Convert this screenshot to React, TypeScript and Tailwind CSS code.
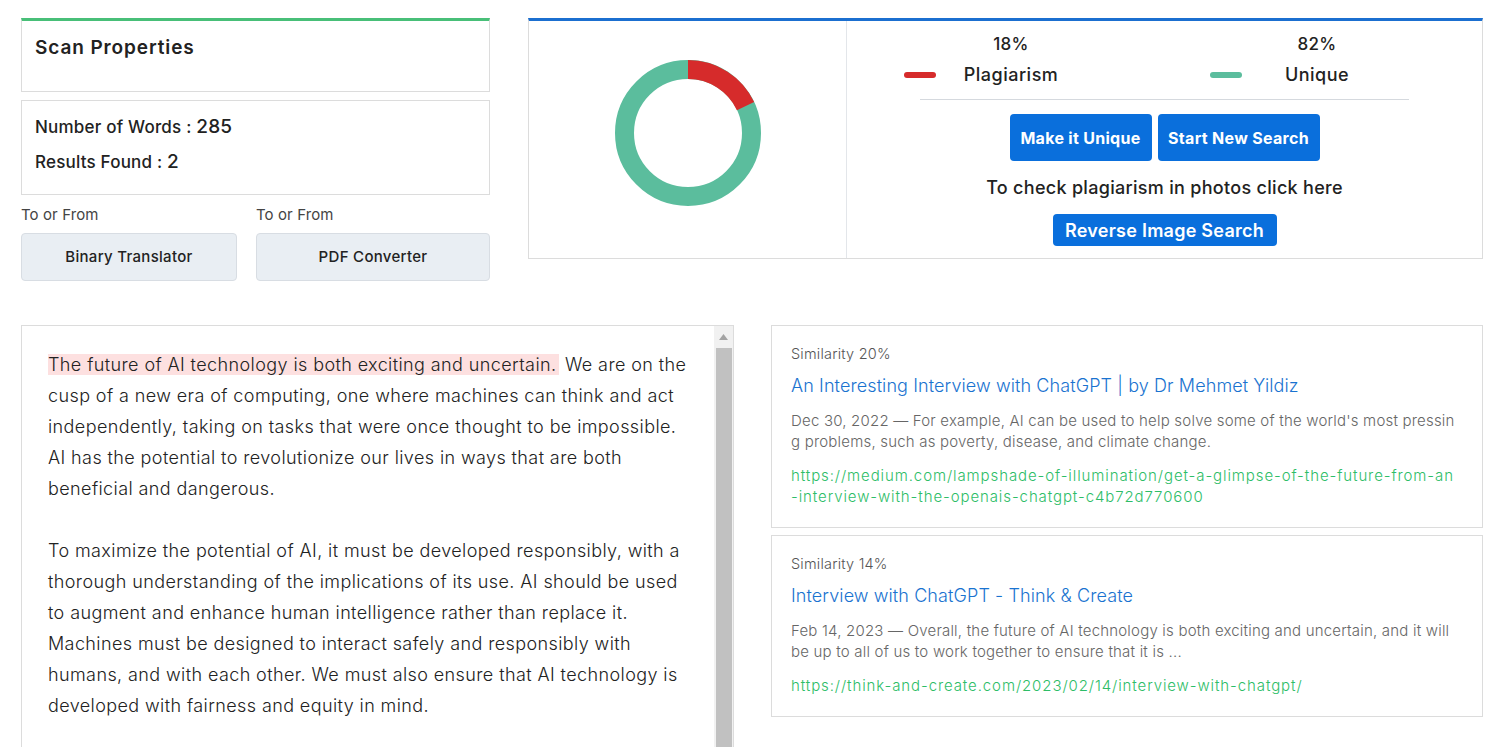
import React from 'react';

const font = { fontFamily: 'Inter, "Noto Sans", sans-serif' };

const Donut = () => {
  const r = 63.5;
  const c = 2 * Math.PI * r;
  const red = c * 0.18;
  return (
    <svg width="148" height="148" viewBox="0 0 148 148">
      <circle cx="74" cy="74" r={r} fill="none" stroke="#5bbd9d" strokeWidth="19" />
      <circle
        cx="74"
        cy="74"
        r={r}
        fill="none"
        stroke="#d62b2b"
        strokeWidth="19"
        strokeDasharray={`${red} ${c}`}
        transform="rotate(-90 74 74)"
      />
    </svg>
  );
};

const results = [
  {
    similarity: 'Similarity 20%',
    title: 'An Interesting Interview with ChatGPT | by Dr Mehmet Yildiz',
    desc: ["Dec 30, 2022 — For example, AI can be used to help solve some of the world's most pressin", 'g problems, such as poverty, disease, and climate change.'],
    url: ['https://medium.com/lampshade-of-illumination/get-a-glimpse-of-the-future-from-an', '-interview-with-the-openais-chatgpt-c4b72d770600'],
  },
  {
    similarity: 'Similarity 14%',
    title: 'Interview with ChatGPT - Think & Create',
    desc: ['Feb 14, 2023 — Overall, the future of AI technology is both exciting and uncertain, and it will', 'be up to all of us to work together to ensure that it is ...'],
    url: ['https://think-and-create.com/2023/02/14/interview-with-chatgpt/'],
  },
];

export default function App() {
  return (
    <div style={font} className="h-[747px] w-[1503px] overflow-hidden bg-white text-[#222]">
      <div className="flex items-start gap-[38px] pl-[21px] pr-[20px] pt-[18px]">
        {/* left column */}
        <div className="flex w-[469px] flex-col">
          <div className="h-[74px] border border-t-[3px] border-[#dcdcdc] border-t-[#48bf78] px-[13px] pt-[13px]">
            <h2 className="text-[19px] font-semibold tracking-[0.9px]">Scan Properties</h2>
          </div>
          <div className="mt-[8px] flex h-[95px] flex-col gap-[6px] border border-[#dcdcdc] px-[13px] pt-[12px]">
            <div className="text-[17px] font-medium tracking-[0.2px]">
              Number of Words : <span className="text-[19px]">285</span>
            </div>
            <div className="text-[17px] font-medium tracking-[0.2px]">
              Results Found : <span className="text-[19px]">2</span>
            </div>
          </div>
          <div className="mt-[9px] flex gap-[19px]">
            <div className="flex w-[216px] flex-col">
              <span className="text-[15px] leading-[22px] tracking-[0.1px] text-[#444]">To or From</span>
              <button className="mt-[7px] h-[48px] rounded-[4px] border border-[#d8dde3] bg-[#e9eef3] text-[15px] font-medium tracking-[0.3px] text-[#222]">
                Binary Translator
              </button>
            </div>
            <div className="flex flex-1 flex-col">
              <span className="text-[15px] leading-[22px] tracking-[0.1px] text-[#444]">To or From</span>
              <button className="mt-[7px] h-[48px] rounded-[4px] border border-[#d8dde3] bg-[#e9eef3] text-[15px] font-medium tracking-[0.3px] text-[#222]">
                PDF Converter
              </button>
            </div>
          </div>
        </div>

        {/* right card */}
        <div className="flex h-[241px] flex-1 border border-t-[3px] border-[#dcdcdc] border-t-[#1b6fd0]">
          <div className="flex w-[318px] items-start justify-center border-r border-[#e3e6ea] pt-[38px]">
            <Donut />
          </div>
          <div className="flex flex-1 flex-col items-center">
            <div className="flex w-full pl-[57px] pt-[12px]">
              <div className="flex items-end">
                <span className="mb-[8px] h-[6px] w-[32px] rounded-full bg-[#d62b2b]" />
                <div className="flex w-[150px] flex-col items-center">
                  <span className="text-[17px] font-medium leading-[22px] tracking-[0.3px]">18%</span>
                  <span className="mt-[9px] text-[18px] font-medium leading-[22px] tracking-[0.5px]">Plagiarism</span>
                </div>
              </div>
              <div className="ml-[124px] flex items-end">
                <span className="mb-[8px] h-[6px] w-[32px] rounded-full bg-[#5bbd9d]" />
                <div className="flex w-[150px] flex-col items-center">
                  <span className="text-[17px] font-medium leading-[22px] tracking-[0.3px]">82%</span>
                  <span className="mt-[9px] text-[18px] font-medium leading-[22px] tracking-[0.5px]">Unique</span>
                </div>
              </div>
            </div>
            <div className="mt-[13px] h-px w-[489px] bg-[#d5d9de]" />
            <div className="mt-[14px] flex gap-[6px]">
              <button className="h-[47px] w-[142px] rounded-[4px] bg-[#0a6fdc] text-[16px] font-bold tracking-[0.3px] text-white">Make it Unique</button>
              <button className="h-[47px] w-[162px] rounded-[4px] bg-[#0a6fdc] text-[16px] font-bold tracking-[0.3px] text-white">Start New Search</button>
            </div>
            <p className="mt-[16px] text-[18px] font-medium leading-[22px] tracking-[0.3px]">To check plagiarism in photos click here</p>
            <button className="mt-[15px] h-[32px] w-[224px] rounded-[4px] bg-[#0a6fdc] text-[18px] font-semibold tracking-[0.25px] text-white">
              Reverse Image Search
            </button>
          </div>
        </div>
      </div>

      {/* bottom */}
      <div className="mt-[44px] flex gap-[37px] pl-[21px] pr-[20px]">
        <div className="flex h-[440px] w-[713px] border border-[#dcdcdc]">
          <div className="flex-1 pl-[26px] pt-[23px] text-[18px] font-light leading-[31px] tracking-[0.4px] text-[#222]">
            <p>
              <span className="bg-[#fde0e0] pr-[3px]">The future of AI technology is both exciting and uncertain.</span> We are on the
              <br />
              cusp of a new era of computing, one where machines can think and act
              <br />
              independently, taking on tasks that were once thought to be impossible.
              <br />
              AI has the potential to revolutionize our lives in ways that are both
              <br />
              beneficial and dangerous.
            </p>
            <p className="mt-[31px]">
              To maximize the potential of AI, it must be developed responsibly, with a
              <br />
              thorough understanding of the implications of its use. AI should be used
              <br />
              to augment and enhance human intelligence rather than replace it.
              <br />
              Machines must be designed to interact safely and responsibly with
              <br />
              humans, and with each other. We must also ensure that AI technology is
              <br />
              developed with fairness and equity in mind.
            </p>
          </div>
          <div className="flex w-[19px] flex-col bg-[#f1f1f1]">
            <div className="flex h-[22px] items-center justify-center">
              <svg width="9" height="6" viewBox="0 0 9 6">
                <path d="M4.5 0 L9 6 L0 6 Z" fill="#a3a3a3" />
              </svg>
            </div>
            <div className="mx-auto w-[16px] flex-1 bg-[#c1c1c1]" />
          </div>
        </div>

        <div className="flex flex-1 flex-col gap-[7px]">
          {results.map((r) => (
            <div key={r.title} className="border border-[#dcdcdc] px-[19px] pb-[20px] pt-[18px]">
              <div className="text-[14.5px] font-light leading-[20px] tracking-[0.2px] text-[#555]">{r.similarity}</div>
              <div className="mt-[10px] text-[18px] font-light leading-[24px] tracking-[0.1px] text-[#1a73d0]">{r.title}</div>
              <div className="mt-[12px] whitespace-nowrap text-[15px] font-light leading-[21px] tracking-[0.2px] text-[#666]">
                {r.desc[0]}
                <br />
                {r.desc[1]}
              </div>
              <div className="mt-[13px] whitespace-nowrap text-[15px] font-light leading-[21px] tracking-[0.9px] text-[#2dbd67]">
                {r.url.map((u, i) => (
                  <React.Fragment key={i}>
                    {i > 0 && <br />}
                    {u}
                  </React.Fragment>
                ))}
              </div>
            </div>
          ))}
        </div>
      </div>
    </div>
  );
}
